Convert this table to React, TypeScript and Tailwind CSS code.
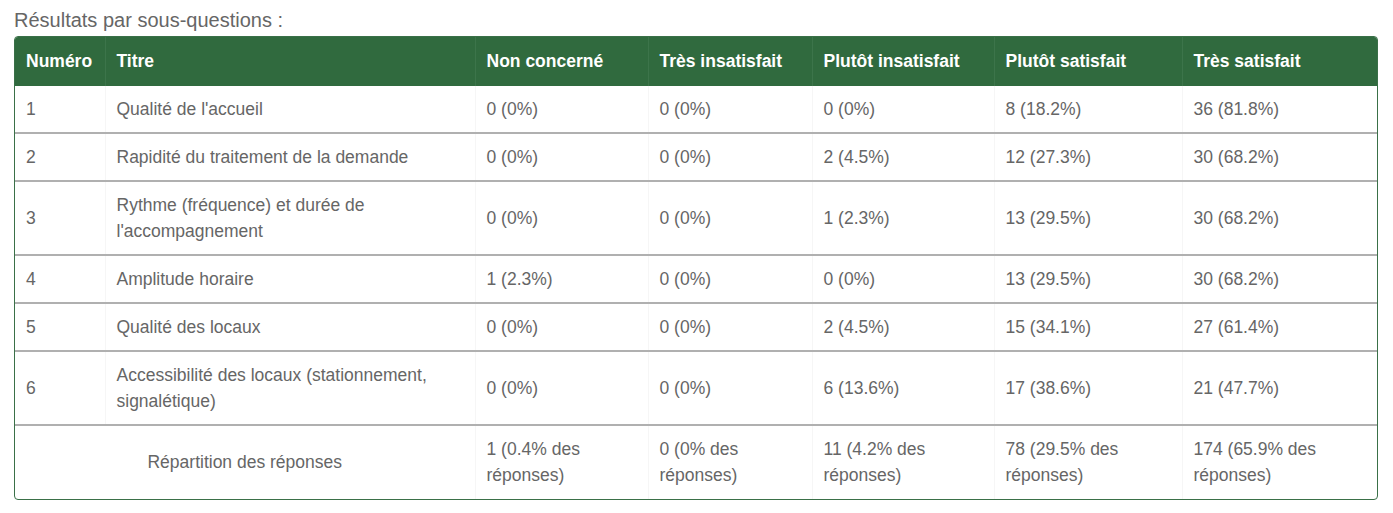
const headers = ['Numéro', 'Titre', 'Non concerné', 'Très insatisfait', 'Plutôt insatisfait', 'Plutôt satisfait', 'Très satisfait'];
const widths = ['w-[90px]', 'w-[370px]', 'w-[173px]', 'w-[164px]', 'w-[182px]', 'w-[188px]', 'w-[197px]'];

const rows = [
  ['1', "Qualité de l'accueil", '0 (0%)', '0 (0%)', '0 (0%)', '8 (18.2%)', '36 (81.8%)'],
  ['2', 'Rapidité du traitement de la demande', '0 (0%)', '0 (0%)', '2 (4.5%)', '12 (27.3%)', '30 (68.2%)'],
  ['3', "Rythme (fréquence) et durée de l'accompagnement", '0 (0%)', '0 (0%)', '1 (2.3%)', '13 (29.5%)', '30 (68.2%)'],
  ['4', 'Amplitude horaire', '1 (2.3%)', '0 (0%)', '0 (0%)', '13 (29.5%)', '30 (68.2%)'],
  ['5', 'Qualité des locaux', '0 (0%)', '0 (0%)', '2 (4.5%)', '15 (34.1%)', '27 (61.4%)'],
  ['6', 'Accessibilité des locaux (stationnement, signalétique)', '0 (0%)', '0 (0%)', '6 (13.6%)', '17 (38.6%)', '21 (47.7%)'],
];

const totals = ['1 (0.4% des réponses)', '0 (0% des réponses)', '11 (4.2% des réponses)', '78 (29.5% des réponses)', '174 (65.9% des réponses)'];

export default function App() {
  return (
    <div className="bg-white px-[14px] pt-[8px] font-['Liberation_Sans',Arial,sans-serif] text-[17.5px] text-[#666]">
      <p className="mb-[3px] text-[20px] leading-[25px] text-[#666]">Résultats par sous-questions :</p>
      <div className="w-[1364px] overflow-hidden rounded-[4px] border border-[#3a7048]">
        <table className="w-full table-fixed border-collapse leading-[26px]">
          <thead>
            <tr className="bg-[#306a3e] text-white">
              {headers.map((h, i) => (
                <th key={h} className={`${widths[i]} border-l border-[#3c744a] first:border-l-0 px-[11px] pt-[11px] pb-[12px] text-left font-bold`}>
                  {h}
                </th>
              ))}
            </tr>
          </thead>
          <tbody>
            {rows.map((r) => (
              <tr key={r[0]} className="border-b-2 border-[#b0b0b0]">
                {r.map((c, i) => (
                  <td key={i} className="border-l border-[#f6f6f6] first:border-l-0 px-[11px] py-[10px] align-middle">
                    {c}
                  </td>
                ))}
              </tr>
            ))}
            <tr>
              <td colSpan={2} className="px-[11px] pt-[10px] pb-[11px] text-center">Répartition des réponses</td>
              {totals.map((t, i) => (
                <td key={i} className="border-l border-[#f6f6f6] px-[11px] pt-[10px] pb-[11px]">{t}</td>
              ))}
            </tr>
          </tbody>
        </table>
      </div>
    </div>
  );
}
